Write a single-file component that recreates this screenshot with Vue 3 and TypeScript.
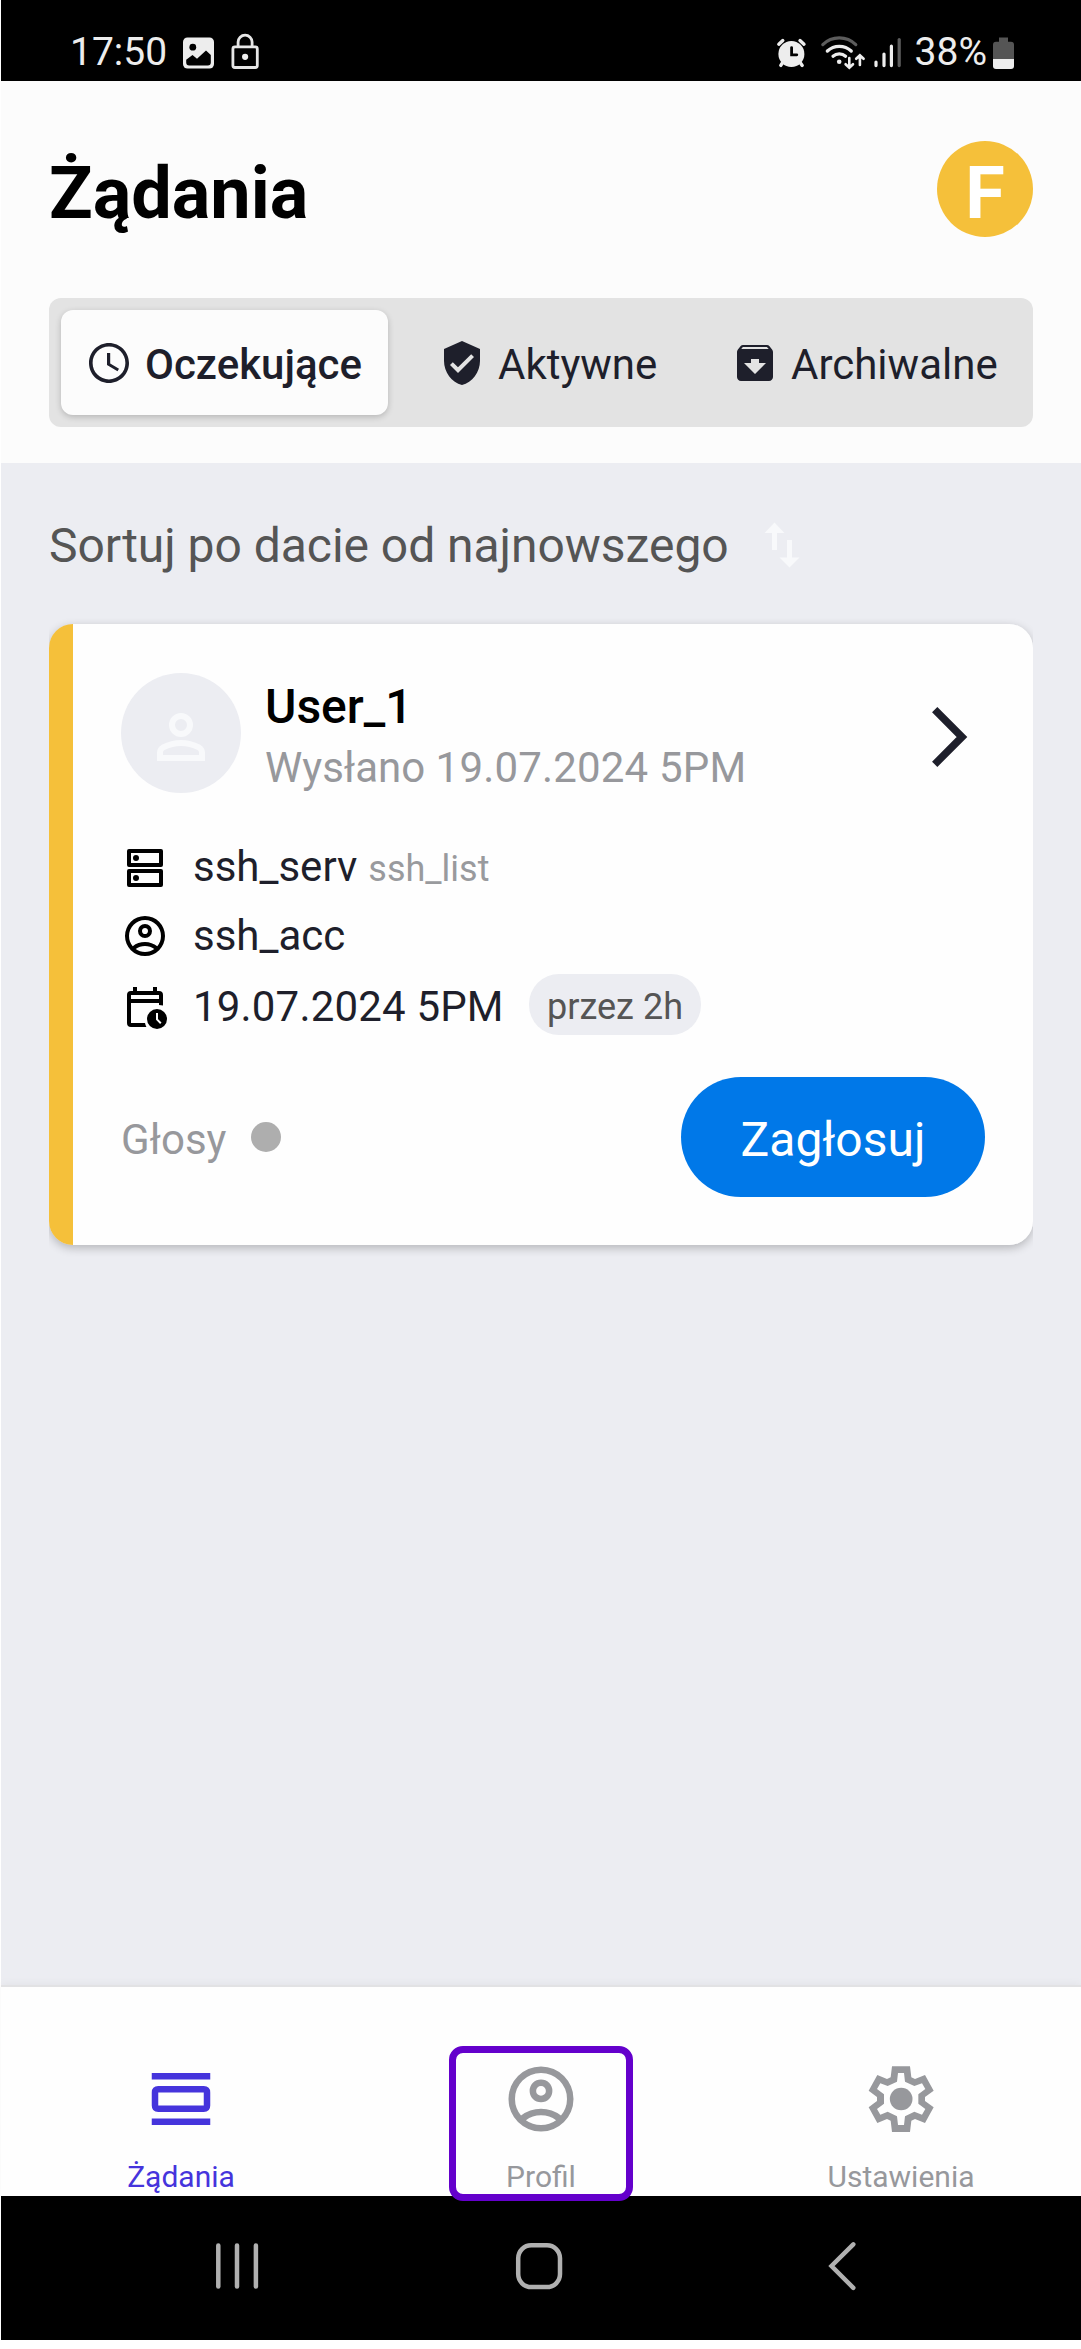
<script setup lang="ts">
interface Tab {
  id: string
  label: string
  path: string
  active: boolean
}

interface NavItem {
  id: 'requests' | 'profile' | 'settings'
  label: string
}

const accountPath =
  'M5.85 17.1q1.275-.975 2.85-1.538T12 15t3.3.563 2.85 1.537q.875-1.025 1.363-2.325T20 12q0-3.325-2.338-5.663T12 4 6.337 6.338 4 12q0 1.475.488 2.775T5.85 17.1M12 13q-1.475 0-2.488-1.012T8.5 9.5t1.013-2.488T12 6t2.488 1.013T15.5 9.5t-1.012 2.488T12 13m0 9q-2.075 0-3.9-.788t-3.175-2.137-2.137-3.175T2 12t.788-3.9 2.137-3.175T8.1 2.788 12 2t3.9.788 3.175 2.137T21.213 8.1 22 12t-.788 3.9-2.137 3.175-3.175 2.138T12 22m0-2q1.325 0 2.5-.387t2.15-1.113q-.975-.725-2.15-1.112T12 17t-2.5.388T7.35 18.5q.975.725 2.15 1.113T12 20m0-9q.65 0 1.075-.425T13.5 9.5t-.425-1.075T12 8t-1.075.425T10.5 9.5t.425 1.075T12 11z'

const tabs: Tab[] = [
  {
    id: 'pending',
    label: 'Oczekujące',
    active: true,
    path: 'M11.99 2C6.47 2 2 6.48 2 12s4.47 10 9.99 10C17.52 22 22 17.52 22 12S17.52 2 11.99 2zM12 20.2c-4.53 0-8.2-3.67-8.2-8.2s3.67-8.2 8.2-8.2 8.2 3.67 8.2 8.2-3.67 8.2-8.2 8.2zM12.6 7H11v6l5.25 3.15.75-1.23-4.4-2.67z',
  },
  {
    id: 'current',
    label: 'Aktywne',
    active: false,
    path: 'M12 1L3 5v6c0 5.55 3.84 10.74 9 12 5.16-1.26 9-6.45 9-12V5l-9-4zm-2 16l-4-4 1.41-1.41L10 14.17l6.59-6.59L18 9l-8 8z',
  },
  {
    id: 'archived',
    label: 'Archiwalne',
    active: false,
    path: 'M20.54 5.23l-1.39-1.68C18.88 3.21 18.47 3 18 3H6c-.47 0-.88.21-1.16.55L3.46 5.23C3.17 5.57 3 6.02 3 6.5V19c0 1.1.9 2 2 2h14c1.1 0 2-.9 2-2V6.5c0-.48-.17-.93-.46-1.27zM12 17.5L6.5 12H10v-2h4v2h3.5L12 17.5zM5.12 5l.81-1h12l.94 1H5.12z',
  },
]

const navItems: NavItem[] = [
  { id: 'requests', label: 'Żądania' },
  { id: 'profile', label: 'Profil' },
  { id: 'settings', label: 'Ustawienia' },
]
</script>

<template>
  <div class="screen">
    <div class="status-bar">
      <div class="status-left">
        <span class="status-text">17:50</span>
        <svg class="status-image" width="31" height="32" viewBox="183 36.5 31 32">
          <rect x="183" y="37" width="31" height="31" rx="4.5" fill="#ededed" />
          <circle cx="192.8" cy="46.7" r="3.4" />
          <path d="M186.2 59.3l6.3-4.8 4.5 3.8 9-8.3 4.8 4.5V62q0 3-3 3h-18.6q-3 0-3-3z" />
        </svg>
        <svg class="status-lock" width="28" height="36" viewBox="231.5 33.5 28 36" fill="none" stroke="#e6e6e6" stroke-width="2.8">
          <rect x="233.4" y="47.4" width="24.4" height="20.6" rx="2" />
          <path d="M238.6 47v-4.4a7 7 0 0 1 14 0V47" />
          <circle cx="245.6" cy="57.3" r="3.1" fill="#ededed" stroke="none" />
        </svg>
      </div>
      <div class="status-right">
        <svg width="126" height="36" viewBox="774 34 126 36" fill="none" stroke-linecap="round">
          <circle cx="789.4" cy="53" r="13" fill="#ededed" />
          <path d="M776.8 43.2l4-3.6M802 43.2l-4-3.6" stroke="#ededed" stroke-width="3.4" />
          <path d="M781 61l-2.2 3.4M797.8 61l2.4 3.4" stroke="#ededed" stroke-width="3.4" />
          <path d="M789.6 46.6v7.2h5.2" stroke="#000" stroke-width="2.8" />
          <path d="M820.8 43.6a23.5 23.5 0 0 1 33 0" stroke="#5c5c5c" stroke-width="3.2" />
          <path d="M825.4 50a17.5 17.5 0 0 1 23.8 0" stroke="#ededed" stroke-width="3.4" />
          <path d="M831 55.2a9.5 9.5 0 0 1 12.6 0" stroke="#ededed" stroke-width="3.2" />
          <circle cx="837.2" cy="60.7" r="2.3" fill="#ededed" />
          <path d="M847.3 57v9.6M843.6 63.2l3.7 3.6 3.7-3.6M857.9 64v-9.6M854.2 57.8l3.7-3.6 3.7 3.6" stroke="#ededed" stroke-width="2.6" />
          <path d="M874 61v3.6M882 53v11.6M889.4 45.2v19.4" stroke="#ededed" stroke-width="3.2" />
          <path d="M897.2 38.6v26" stroke="#5c5c5c" stroke-width="3.2" />
        </svg>
        <span class="status-text percent">38%</span>
        <svg class="battery" width="21" height="32" viewBox="992 36 21 32">
          <path d="M998 36.4h9v4.4h3q3 0 3 3V58h-21V43.8q0-3 3-3h3z" fill="#555" />
          <path d="M992 58h21v7q0 3-3 3h-15q-3 0-3-3z" fill="#ededed" />
        </svg>
      </div>
    </div>

    <header class="header">
      <div class="title-row">
        <h1 class="title">Żądania</h1>
        <div class="account">F</div>
      </div>
      <div class="segments">
        <button v-for="tab in tabs" :key="tab.id" class="segment" :class="[tab.id, { active: tab.active }]">
          <svg width="48" height="48" viewBox="0 0 24 24" fill="#1e1f2b" fill-rule="evenodd"><path :d="tab.path" /></svg>
          <span>{{ tab.label }}</span>
        </button>
      </div>
    </header>

    <main class="content">
      <div class="sort-row">
        <span class="sort-label">Sortuj po dacie od najnowszego</span>
        <svg width="60" height="60" viewBox="0 0 24 24" fill="#f8f9fb">
          <path d="M9 3L5 7.2h3V14h2V7.2h3L9 3zm7 14V10h-2v7h-3l4 4 4-4h-3z" />
        </svg>
      </div>

      <article class="card">
        <div class="card-head">
          <div class="avatar">
            <svg width="72" height="72" viewBox="0 0 24 24" fill="#f8f9fb" fill-rule="evenodd">
              <path d="M12 4a4 4 0 1 0 0 8 4 4 0 0 0 0-8zm0 2a2 2 0 1 1 0 4 2 2 0 0 1 0-4zM4 20v-2.8q0-.85.438-1.563T5.6 14.55q1.55-.775 3.15-1.163T12 13t3.25.387 3.15 1.163q.725.375 1.163 1.087T20 17.2V20zm2-2h12v-.8q0-.275-.137-.5t-.363-.35q-1.35-.675-2.725-1.012T12 15t-2.775.338T6.5 16.35q-.225.125-.363.35T6 17.2z" />
            </svg>
          </div>
          <div class="who">
            <div class="name">User_1</div>
            <div class="sent">Wysłano <span class="date">19.07.2024 5PM</span></div>
          </div>
          <svg class="chevron" width="36" height="60" viewBox="0 0 36 60" fill="none" stroke="#1e1f2b" stroke-width="7.5">
            <path d="M2.7 2.7L30 30 2.7 57.3" />
          </svg>
        </div>

        <div class="detail">
          <svg width="48" height="48" viewBox="0 0 24 24">
            <g fill="none" stroke="#000" stroke-width="2" stroke-linejoin="round">
              <rect x="4" y="3.5" width="16" height="7" />
              <rect x="4" y="13.5" width="16" height="7" />
            </g>
            <circle cx="7.5" cy="7" r="1.5" /><circle cx="7.5" cy="17" r="1.5" />
          </svg>
          <span class="value">ssh_serv</span>
          <span class="hint">ssh_list</span>
        </div>
        <div class="detail account-row">
          <svg width="48" height="48" viewBox="0 0 24 24" fill-rule="evenodd"><path :d="accountPath" /></svg>
          <span class="value">ssh_acc</span>
        </div>
        <div class="detail date-row">
          <svg width="48" height="48" viewBox="0 0 24 24">
            <path d="M6 2h2v2h8V2h2v2h1q2 0 2 2v5.3q-1-.3-2-.3v-1H5v10h7q.2 1.1.7 2H5q-2 0-2-2V6q0-2 2-2h1zM5 6v2h14V6z" fill-rule="evenodd" />
            <circle cx="18" cy="18" r="5" />
            <path d="M18 15v3.2l1.9 1.9" fill="none" stroke="#fff" stroke-width="1" />
          </svg>
          <span class="value date">19.07.2024 5PM</span>
          <span class="chip">przez 2h</span>
        </div>

        <div class="card-foot">
          <span class="votes">Głosy</span>
          <span class="vote-dot"></span>
          <button class="vote">Zagłosuj</button>
        </div>
      </article>
    </main>

    <nav class="bottom-nav">
      <div v-for="item in navItems" :key="item.id" class="nav-item" :class="item.id">
        <svg v-if="item.id === 'requests'" width="78" height="78" viewBox="0 0 24 24" fill="#4534dc" fill-rule="evenodd">
          <path d="M3 4h18v2H3zM3 18h18v2H3zM5 8h14q2 0 2 2v4q0 2-2 2H5q-2 0-2-2v-4q0-2 2-2zM5 10v4h14v-4z" />
        </svg>
        <svg v-else-if="item.id === 'profile'" width="78" height="78" viewBox="0 0 24 24" fill="#97989c" fill-rule="evenodd">
          <path :d="accountPath" />
        </svg>
        <svg v-else width="78" height="78" viewBox="366 300 234 234" fill="#97989c" fill-rule="evenodd">
          <path
            d="M456 319H510L514 352 525 357 555 345 581 392 555 411V423L581 442 555 489 525 477 514 482 510 516H456L452 482 441 477 412 489 386 442 411 423V411L386 392 412 345 441 357 452 352zM474 339L471 365 443 378 421 370 411 387 432 403V431L411 447 421 464 443 455 471 469 474 495H492L495 469 523 455 546 464 556 447 535 431V403L556 387 546 370 523 378 495 365 492 339z"
          />
          <circle cx="483.5" cy="417" r="34" />
        </svg>
        <span class="nav-label">{{ item.label }}</span>
        <span v-if="item.id === 'profile'" class="highlight"></span>
      </div>
    </nav>

    <div class="system-bar">
      <svg width="1080" height="144" viewBox="1 2196 1080 144" fill="none" stroke="#b0b0b0" stroke-width="4.5" stroke-linecap="round">
        <path d="M218.3 2245.5v41M237 2245.5v41M255.9 2245.5v41" />
        <rect x="518.2" y="2245.3" width="41.8" height="41.8" rx="13" />
        <path d="M853.3 2244.3L831.5 2266l21.8 21.8" />
      </svg>
    </div>
  </div>
</template>

<style>
body {
  margin: 0;
  background: #fff;
}
</style>

<style scoped>
.screen {
  box-sizing: border-box;
  width: 1081px;
  height: 2349px;
  padding: 0 0 9px 1px;
  display: flex;
  flex-direction: column;
  overflow: hidden;
  background: #fff;
  font-family: Roboto, sans-serif;
}

svg {
  display: block;
  flex: none;
}

button {
  border: 0;
  font: inherit;
  background: none;
}

.status-bar {
  flex: none;
  box-sizing: border-box;
  height: 81px;
  padding: 24px 67px 0 69px;
  display: flex;
  justify-content: space-between;
  background: #000;
}

.status-left,
.status-right {
  display: flex;
  align-items: center;
  height: 57px;
}

.status-text {
  color: #ededed;
  font-size: 39px;
  line-height: 57px;
}

.status-image {
  margin-left: 16px;
}

.status-lock {
  margin-left: 17px;
  margin-bottom: 3px;
}

.percent {
  margin-left: 13px;
}

.battery {
  margin-left: 6px;
}

.header {
  flex: none;
  box-sizing: border-box;
  height: 382px;
  padding: 60px 48px 0;
  background: #fcfcfc;
}

.title-row {
  display: flex;
  justify-content: space-between;
  height: 96px;
}

.title {
  margin: 0;
  padding-top: 5px;
  color: #000;
  font-size: 72px;
  font-weight: 700;
  line-height: 96px;
}

.account {
  box-sizing: border-box;
  width: 96px;
  height: 96px;
  padding-top: 5px;
  border-radius: 50%;
  background: #f5c03a;
  color: #fff;
  font-size: 72px;
  font-weight: 700;
  line-height: 96px;
  text-align: center;
}

.segments {
  box-sizing: border-box;
  height: 129px;
  margin-top: 61px;
  padding: 12px;
  display: flex;
  justify-content: space-between;
  border-radius: 12px;
  background: #e3e3e3;
}

.segment {
  box-sizing: border-box;
  display: flex;
  align-items: center;
  gap: 12px;
  padding: 0 0 0 24px;
  border-radius: 12px;
  color: #1e1f2b;
  font-size: 42px;
  line-height: 60px;
}

.segment span {
  padding-top: 4px;
}

.segment.pending {
  width: 327px;
}

.segment.current {
  width: 267px;
}

.segment.archived {
  width: 314px;
}

.segment.active {
  background: #fcfcfc;
  font-weight: 500;
  box-shadow: 0 2px 6px rgba(0, 0, 0, 0.2);
}

.content {
  flex: 1;
  padding: 50px 48px 0;
  background: #ecedf2;
}

.sort-row {
  display: flex;
  align-items: center;
  gap: 24px;
  height: 63px;
  color: #555;
  font-size: 48px;
  line-height: 63px;
}

.sort-label {
  width: 679px;
  padding-top: 2px;
  letter-spacing: -0.04px;
  white-space: nowrap;
}

.card {
  box-sizing: border-box;
  height: 621px;
  margin-top: 48px;
  padding: 49px 48px 0 72px;
  border-radius: 24px;
  background: linear-gradient(to right, #f5c03a 24px, #fefefe 24px);
  box-shadow: 0 3px 10px rgba(0, 0, 0, 0.24);
  clip-path: inset(-30px 0 -30px 0);
}

.card-head {
  display: flex;
  height: 120px;
}

.avatar {
  box-sizing: border-box;
  width: 120px;
  height: 120px;
  padding: 28px 24px;
  border-radius: 50%;
  background: #ecedf2;
}

.who {
  flex: 1;
  margin: 4px 0 0 24px;
  line-height: 60px;
}

.name {
  color: #000;
  font-size: 48px;
  font-weight: 500;
}

.sent {
  margin-top: 1px;
  color: #97989c;
  font-size: 42px;
}

.date {
  letter-spacing: 0.18px;
}

.chevron {
  margin: 34px 17px 0 0;
}

.detail {
  display: flex;
  align-items: center;
  height: 48px;
  margin-top: 51px;
  color: #1e1f2b;
  font-size: 42px;
  line-height: 48px;
}

.value {
  margin: -2px 0 0 24px;
}

.hint {
  margin: 1px 0 0 11px;
  color: #999a9d;
  font-size: 36px;
}

.account-row {
  margin-top: 20px;
}

.account-row .value {
  margin-top: 0;
}

.date-row {
  height: 61px;
  margin-top: 14px;
}

.date-row svg {
  margin-top: 5px;
}

.date-row .value {
  width: 312px;
  margin-top: 4px;
  white-space: nowrap;
}

.chip {
  box-sizing: border-box;
  width: 172px;
  height: 61px;
  margin-left: 24px;
  padding-top: 5px;
  border-radius: 30px;
  background: #ecedf2;
  color: #555;
  font-size: 36px;
  line-height: 56px;
  text-align: center;
}

.card-foot {
  display: flex;
  align-items: center;
  height: 120px;
  margin-top: 42px;
}

.votes {
  padding-top: 5px;
  color: #97989c;
  font-size: 42px;
}

.vote-dot {
  width: 30px;
  height: 30px;
  margin-left: 25px;
  border-radius: 50%;
  background: #aeaeae;
}

.vote {
  width: 304px;
  height: 120px;
  margin-left: auto;
  padding: 5px 0 0;
  border-radius: 60px;
  background: #0078e8;
  color: #fff;
  font-size: 48px;
}

.bottom-nav {
  position: relative;
  flex: none;
  box-sizing: border-box;
  height: 211px;
  padding-top: 73px;
  display: grid;
  grid-template-columns: repeat(3, 360px);
  border-top: 2px solid #e2e2e4;
  background: #fefefe;
  box-shadow: 0 -2px 8px rgba(0, 0, 0, 0.04);
}

.nav-item {
  position: relative;
  display: flex;
  flex-direction: column;
  align-items: center;
  color: #97989c;
}

.nav-item.requests {
  color: #4534dc;
}

.nav-label {
  margin-top: 21px;
  font-size: 30px;
  line-height: 36px;
}

/* Focus frame drawn over the nav item and the edge of the system bar */
.highlight {
  position: absolute;
  z-index: 1;
  box-sizing: border-box;
  top: -14px;
  left: 88px;
  width: 184px;
  height: 155px;
  border: 7px solid #6400cc;
  border-radius: 14px;
}

.system-bar {
  flex: none;
  height: 144px;
  background: #000;
}
</style>
